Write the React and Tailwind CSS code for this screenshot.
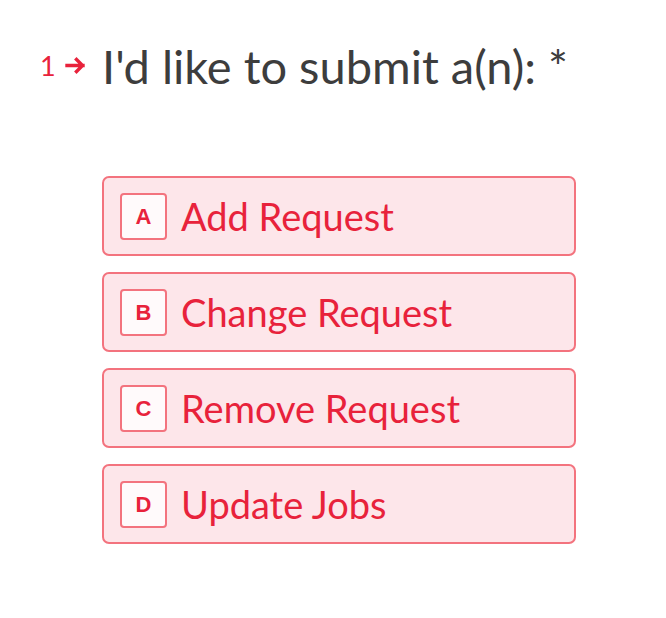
const options = [
  { key: "A", label: "Add Request" },
  { key: "B", label: "Change Request" },
  { key: "C", label: "Remove Request" },
  { key: "D", label: "Update Jobs" },
];

const App = () => {
  return (
    <div className="min-h-screen w-full bg-white font-['Lato',sans-serif]">
      <div className="pt-[36px] pl-[40px]">
        <div className="flex items-start">
          <div className="flex items-center w-[62px] pt-[16px] text-[#e8223b]">
            <span className="text-[27px] leading-none">1</span>
            <svg width="22" height="17" viewBox="0 0 22 17" className="ml-[9px]">
              <path d="M2 8.5h16M11.5 2.5l6 6-6 6" fill="none" stroke="currentColor" strokeWidth="3.4" strokeLinecap="square" />
            </svg>
          </div>
          <h1 className="text-[47px] leading-[60px] text-[#3d3d3d] font-normal">I'd like to submit a(n): *</h1>
        </div>
      </div>
      <div className="pl-[102px] mt-[80px] flex flex-col gap-[16px]">
        {options.map((opt) => (
          <div
            key={opt.key}
            className="w-[474px] h-[80px] flex items-center gap-[14px] px-[16px] rounded-[7px] border-2 border-[#f3737e] bg-[#fde6ea] cursor-pointer"
          >
            <div className="w-[47px] h-[47px] shrink-0 flex items-center justify-center rounded-[4px] border-2 border-[#f3737e] bg-[#fffafb] text-[#e8223b] font-['Liberation_Sans',sans-serif] font-bold text-[22px]">
              {opt.key}
            </div>
            <span className="text-[38px] text-[#e8223b] leading-none">{opt.label}</span>
          </div>
        ))}
      </div>
    </div>
  );
};

export default App;
